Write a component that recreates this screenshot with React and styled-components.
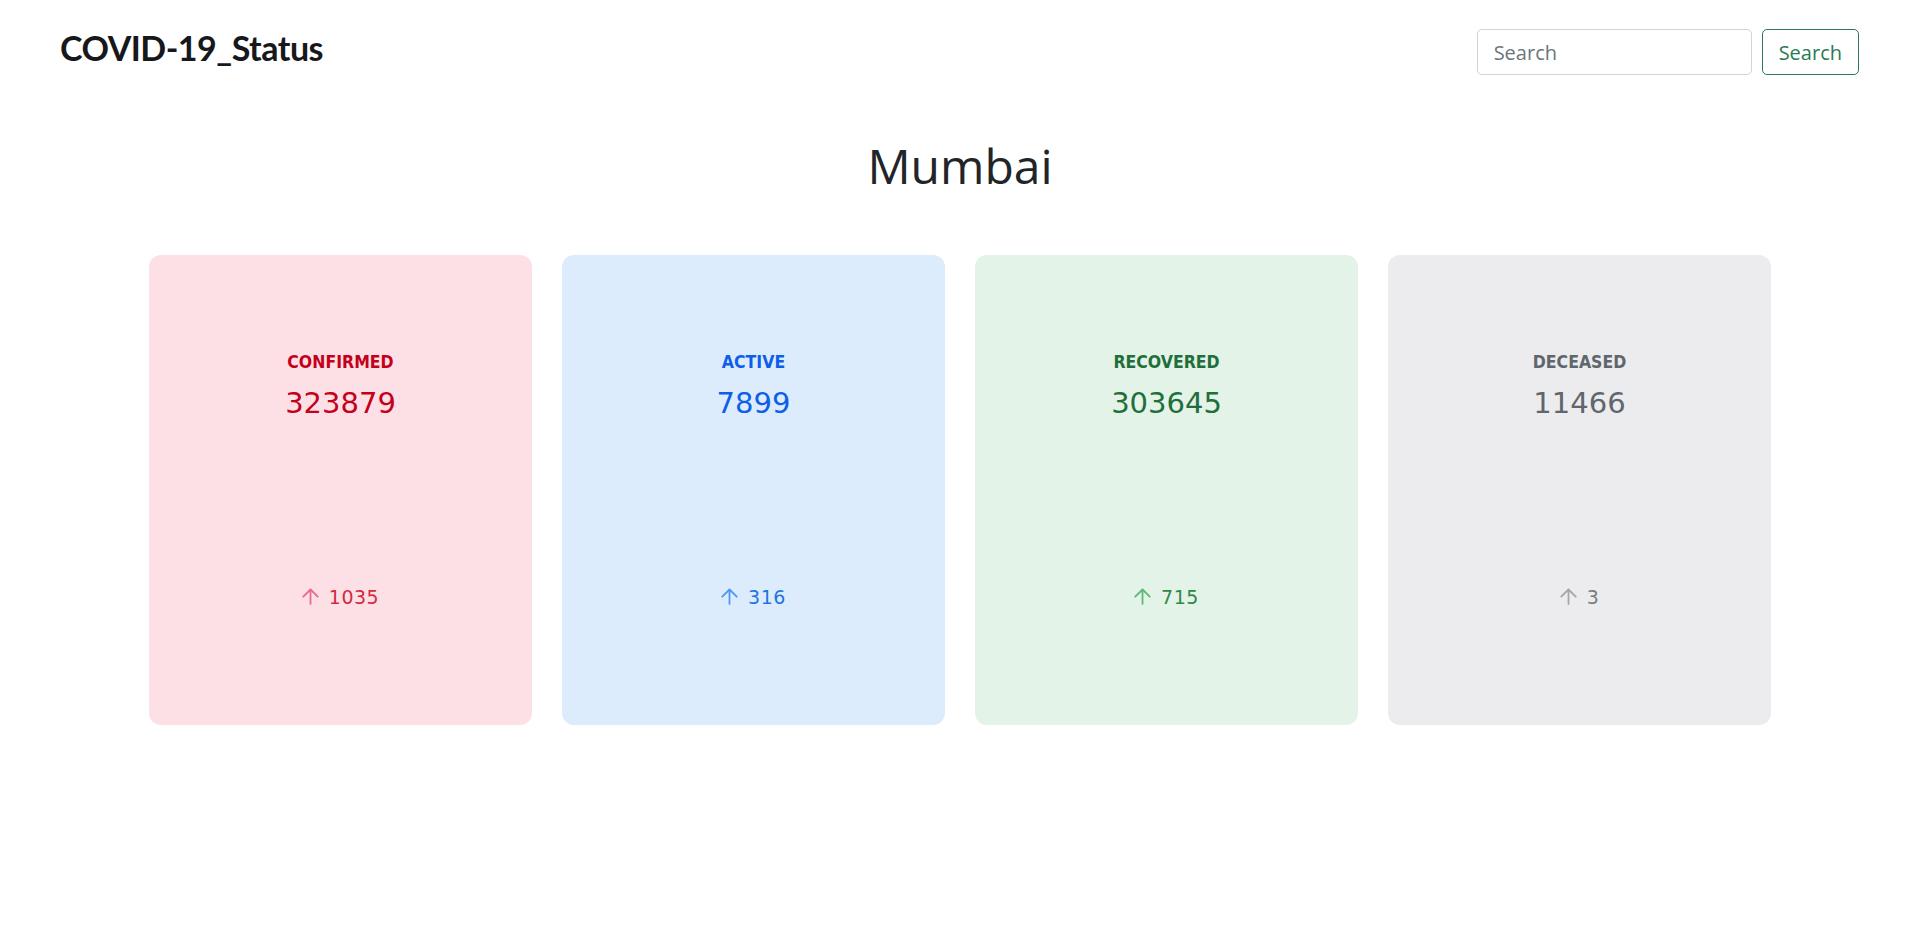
import React from 'react';
import styled, { createGlobalStyle } from 'styled-components';

const GlobalStyle = createGlobalStyle`
  body {
    margin: 0;
    background: #fff;
    font-family: "Open Sans", "Liberation Sans", sans-serif;
    color: #212529;
  }
  * { box-sizing: border-box; }
`

const stats = [
  { key: 'confirmed', label: 'CONFIRMED', total: 323879, delta: 1035 },
  { key: 'active', label: 'ACTIVE', total: 7899, delta: 316 },
  { key: 'recovered', label: 'RECOVERED', total: 303645, delta: 715 },
  { key: 'deceased', label: 'DECEASED', total: 11466, delta: 3 },
];

const palette = {
  confirmed: { bg: '#fde0e6', main: '#c4001a', delta: '#d42a40', arrow: '#ec6a8a' },
  active: { bg: '#ddecfd', main: '#0d5ee8', delta: '#1f74e0', arrow: '#5097f5' },
  recovered: { bg: '#e3f3e8', main: '#1e6f3a', delta: '#2b8a4a', arrow: '#5db97b' },
  deceased: { bg: '#ececee', main: '#5f666d', delta: '#767c83', arrow: '#a2a7ac' },
};

const ArrowUp = ({ color }) => (
  <svg width="17" height="17" viewBox="0 0 16 16" fill="none" stroke={color} strokeWidth="1.7" strokeLinecap="round" strokeLinejoin="round">
    <path d="M8 15V1.5" />
    <path d="M1.2 8.2L8 1.4l6.8 6.8" />
  </svg>
);

const App = () => {
  return (
    <Page>
      <GlobalStyle />
      <NavBar>
        <Brand>COVID-19_Status</Brand>
        <SearchForm onSubmit={(e) => e.preventDefault()}>
          <SearchInput type="search" placeholder="Search" />
          <SearchButton type="submit">Search</SearchButton>
        </SearchForm>
      </NavBar>
      <CityTitle>Mumbai</CityTitle>
      <CardGrid>
        {stats.map((item) => {
          const c = palette[item.key];
          return (
            <StatCard key={item.key} $bg={c.bg}>
              <StatLabel $color={c.main}>{item.label}</StatLabel>
              <StatTotal $color={c.main}>{item.total}</StatTotal>
              <StatDelta $color={c.delta}>
                <ArrowUp color={c.arrow} />
                <span>{item.delta}</span>
              </StatDelta>
            </StatCard>
          )
        })}
      </CardGrid>
    </Page>
  )
}
export default App;

const Page = styled.div`
  width: 100%;
  min-height: 941px;
  background: #fff;
`

const NavBar = styled.nav`
  display: flex;
  justify-content: space-between;
  align-items: flex-start;
  padding: 28px 61px 0 60px;
`

const Brand = styled.div`
  font-family: Lato, "Noto Sans", sans-serif;
  font-weight: 700;
  font-size: 34px;
  line-height: 1.2;
  color: #16181b;
  letter-spacing: -0.5px;
`

const SearchForm = styled.form`
  display: flex;
  gap: 10px;
  margin-top: 1px;
`

const SearchInput = styled.input`
  width: 275px;
  height: 46px;
  padding: 0 16px;
  font-family: "Open Sans", sans-serif;
  font-size: 20px;
  color: #212529;
  border: 1px solid #ced4da;
  border-radius: 5px;
  outline: none;

  &::placeholder {
    color: #6c757d;
  }
`

const SearchButton = styled.button`
  height: 46px;
  padding: 0 16px;
  font-family: "Open Sans", sans-serif;
  font-size: 20px;
  color: #2a7a55;
  background: #fff;
  border: 1px solid #2a7a55;
  border-radius: 5px;
  cursor: pointer;
`

const CityTitle = styled.h1`
  margin: 62px 0 0;
  text-align: center;
  font-family: "Open Sans", "Noto Sans", sans-serif;
  font-weight: 400;
  font-size: 48px;
  line-height: 1.2;
  color: #212529;
`

const CardGrid = styled.div`
  display: grid;
  grid-template-columns: repeat(4, 383px);
  gap: 30px;
  justify-content: center;
  margin-top: 60px;
`

const StatCard = styled.div`
  display: flex;
  flex-direction: column;
  align-items: center;
  height: 470px;
  padding-top: 95px;
  background: ${(p) => p.$bg};
  border-radius: 12px;
  font-family: "DejaVu Sans", Verdana, sans-serif;
`

const StatLabel = styled.div`
  font-family: "DejaVu Sans Condensed", "DejaVu Sans", sans-serif;
  font-size: 17.5px;
  font-weight: 700;
  line-height: 24px;
  color: ${(p) => p.$color};
`

const StatTotal = styled.div`
  margin-top: 12px;
  font-size: 29px;
  line-height: 34px;
  color: ${(p) => p.$color};
`

const StatDelta = styled.div`
  display: flex;
  align-items: center;
  gap: 10px;
  margin-top: 163px;
  font-size: 19px;
  line-height: 28px;
  letter-spacing: 0.5px;
  color: ${(p) => p.$color};
`
